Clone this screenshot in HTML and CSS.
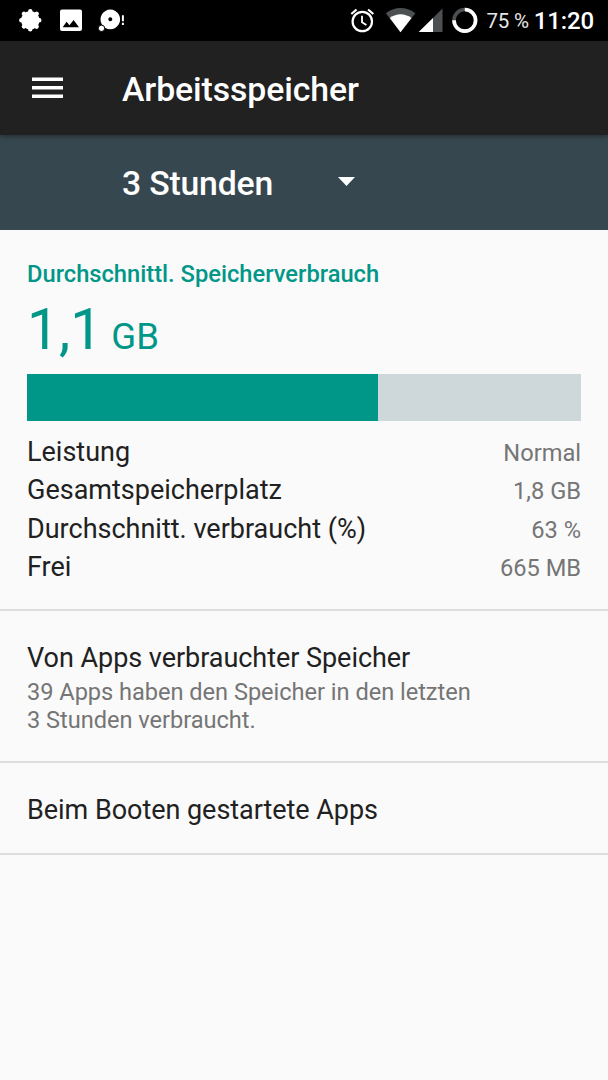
FILE: index.html
```
<!DOCTYPE html>
<html lang="de">

<head>
    <meta charset="UTF-8">
    <meta name="viewport" content="width=device-width, initial-scale=1.0">
    <title>Arbeitsspeicher</title>
    <link rel="stylesheet" href="styles.css">
</head>

<body>
    <div class="statusbar">
        <svg class="notifications" width="130" height="40" viewBox="0 0 130 40" fill="#fff">
            <!-- gear -->
            <circle cx="30.3" cy="20.2" r="9.2"/>
            <circle cx="30.3" cy="20.2" r="9" fill="none" stroke="#fff" stroke-width="4.4" stroke-linecap="round" pathLength="80" stroke-dasharray="0.1 9.9"/>
            <!-- picture -->
            <path fill-rule="evenodd" d="M62 9.5h18a2 2 0 0 1 2 2v17.5a2 2 0 0 1-2 2h-18a2 2 0 0 1-2-2v-17.5a2 2 0 0 1 2-2zM62.7 27.2h16.3l-5.4-7.2-4.1 5.200-2.900-3.400z"/>
            <!-- disc -->
            <path fill-rule="evenodd" d="M110.3 9.6a9.8 9.8 0 1 0 .01 0zM110.3 17.2a2 2 0 1 1-.01 0z"/>
            <circle cx="101.5" cy="28.3" r="3.2" stroke="#000" stroke-width="1"/>
            <path d="M121.900 15.300h2v6h-2zM121.900 22.800h2v2.200h-2z"/>
        </svg>
        <svg class="system" width="140" height="40" viewBox="346 0 140 40" fill="none">
            <!-- alarm -->
            <g stroke="#fff" stroke-width="2.2">
                <circle cx="362.3" cy="21.5" r="9.7"/>
                <path d="M351.300 14l5.200-4.500M373.300 14l-5.200-4.500"/>
                <path stroke-width="1.8" d="M362 15.800v6.400l4.400 2.700"/>
            </g>
            <!-- wifi -->
            <path fill="#4d5052" d="M400.500 32.200L385.800 13.200Q400.500 3 415.400 13.200z"/>
            <path fill="#fff" d="M400.500 32.200L389.800 18Q400.500 10.500 411.500 18z"/>
            <!-- signal -->
            <path fill="#4d5052" d="M419 32L442.500 8.500V32z"/>
            <path fill="#fff" d="M418.700 32L433 18V32z"/>
            <!-- battery -->
            <circle cx="464.8" cy="20.3" r="10.8" stroke="#4d5052" stroke-width="3.6"/>
            <path stroke="#fff" stroke-width="3.6" d="M464.800 9.500a10.800 10.800 0 1 1-10.800 10.800"/>
        </svg>
        <span class="battery">75 %</span>
        <span class="clock">11:20</span>
    </div>

    <header class="toolbar">
        <svg class="menu" width="31" height="22" viewBox="0 0 31 22" fill="#fff">
            <path d="M0 .5h31v3.500H0zM0 9h31v3.500H0zM0 17.500h31v3.500H0z"/>
        </svg>
        <h1 class="title">Arbeitsspeicher</h1>
    </header>

    <div class="spinner">
        <span>3 Stunden</span>
        <svg class="arrow" width="17" height="9" viewBox="0 0 17 9" fill="#fff">
            <path d="M0 0h17L8.500 9z"/>
        </svg>
    </div>

    <main>
        <section class="summary">
            <h2 class="heading">Durchschnittl. Speicherverbrauch</h2>
            <div class="amount">1,1<small> GB</small></div>
            <div class="bar">
                <div class="used"></div>
            </div>
            <dl class="stats">
                <div class="row"><dt>Leistung</dt><dd>Normal</dd></div>
                <div class="row"><dt>Gesamtspeicherplatz</dt><dd>1,8 GB</dd></div>
                <div class="row"><dt>Durchschnitt. verbraucht (%)</dt><dd>63 %</dd></div>
                <div class="row"><dt>Frei</dt><dd>665 MB</dd></div>
            </dl>
        </section>
        <section class="item apps">
            <h3>Von Apps verbrauchter Speicher</h3>
            <p>39 Apps haben den Speicher in den letzten<br>3 Stunden verbraucht.</p>
        </section>
        <section class="item boot">
            <h3>Beim Booten gestartete Apps</h3>
        </section>
    </main>
</body>

</html>
```
FILE: styles.css
```
* {
    box-sizing: border-box;
    margin: 0;
    padding: 0;
}

body {
    height: 1080px;
    background-color: #fafafa;
    color: #212121;
    font-family: Roboto, "Liberation Sans", sans-serif;
    font-size: 27px;
    overflow: hidden;
}

.statusbar {
    display: flex;
    align-items: center;
    height: 40.5px;
    padding-right: 14px;
    background-color: #000;
    color: #fff;
}

.system {
    margin-left: auto;
}

.battery {
    margin-left: 1px;
    padding-top: 2px;
    font-size: 20.5px;
    letter-spacing: -0.2px;
    color: #e6e6e6;
}

.clock {
    margin-left: 5px;
    padding-top: 1px;
    font-size: 24px;
    font-weight: 500;
    letter-spacing: -0.15px;
}

.toolbar {
    display: flex;
    align-items: center;
    position: relative;
    height: 94.6px;
    padding-left: 32px;
    background-color: #212121;
    color: #fff;
    box-shadow: 0 1px 5px rgba(0, 0, 0, 0.4);
}

.title {
    margin-left: 59px;
    padding-top: 3px;
    font-size: 33.8px;
    font-weight: 500;
    letter-spacing: -0.1px;
}

.spinner {
    display: flex;
    align-items: center;
    height: 94.5px;
    padding: 3px 0 0 122px;
    background-color: #37474f;
    color: #fff;
    font-size: 33.8px;
    font-weight: 500;
    letter-spacing: -0.2px;
}

.arrow {
    margin: -4px 0 0 65px;
}

.summary {
    height: 381.4px;
    padding: 30px 27px 0;
    border-bottom: 2px solid #dedede;
}

.heading {
    font-size: 23.7px;
    font-weight: 500;
    line-height: 28px;
    color: #009688;
}

.amount {
    margin-top: 8px;
    font-size: 57px;
    line-height: 68px;
    color: #009688;
}

.amount small {
    font-size: 36.5px;
    line-height: 1;
}

.bar {
    height: 47px;
    margin-top: 10px;
    background-color: #ced7da;
}

.used {
    width: 63.3%;
    height: 100%;
    background-color: #009688;
}

.stats {
    margin-top: 12.4px;
}

.row {
    display: flex;
    justify-content: space-between;
    align-items: baseline;
    height: 38.3px;
    line-height: 38px;
}

.row dd {
    font-size: 23.65px;
    color: #757575;
}

.item {
    padding: 31px 27px 0;
    border-bottom: 2px solid #dedede;
}

.item h3 {
    font-size: 27px;
    font-weight: 400;
    line-height: 32px;
    letter-spacing: -0.04px;
}

.item p {
    margin-top: 5px;
    font-size: 23.6px;
    line-height: 27.7px;
    letter-spacing: -0.03px;
    color: #757575;
}

.apps {
    height: 152px;
}

.boot {
    height: 92px;
}
```
